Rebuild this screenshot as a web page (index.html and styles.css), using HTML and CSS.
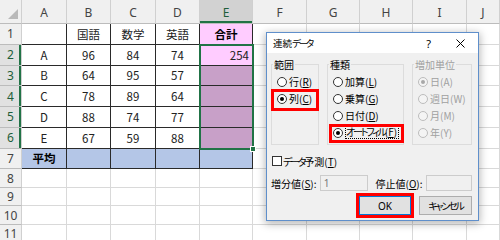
FILE: index.html
```html
<!DOCTYPE html>
<html lang="ja">
<head>
<meta charset="utf-8">
<title>連続データ</title>
<link rel="stylesheet" href="styles.css">
</head>
<body>
<div class="sheet">
  <div class="grid">
    <div class="hd corner"><svg class="tri" width="10" height="10" viewBox="0 0 10 10"><polygon points="10,0 10,10 0,10" fill="#b9b9b9"/></svg></div>
    <div class="hd col">A</div>
    <div class="hd col">B</div>
    <div class="hd col">C</div>
    <div class="hd col">D</div>
    <div class="hd col on">E</div>
    <div class="hd col">F</div>
    <div class="hd col">G</div>
    <div class="hd col">H</div>
    <div class="hd col">I</div>
    <div class="hd col">J</div>

    <div class="hd row">1</div>
    <div class="c t"></div><div class="c t">国語</div><div class="c t">数学</div><div class="c t">英語</div><div class="c t pink b">合計</div>
    <div class="c"></div><div class="c"></div><div class="c"></div><div class="c"></div><div class="c"></div>

    <div class="hd row on">2</div>
    <div class="c t">A</div><div class="c t">96</div><div class="c t">84</div><div class="c t">74</div><div class="c t pink r">254</div>
    <div class="c"></div><div class="c"></div><div class="c"></div><div class="c"></div><div class="c"></div>

    <div class="hd row on">3</div>
    <div class="c t">B</div><div class="c t">64</div><div class="c t">95</div><div class="c t">57</div><div class="c t shade"></div>
    <div class="c"></div><div class="c"></div><div class="c"></div><div class="c"></div><div class="c"></div>

    <div class="hd row on">4</div>
    <div class="c t">C</div><div class="c t">78</div><div class="c t">89</div><div class="c t">64</div><div class="c t shade"></div>
    <div class="c"></div><div class="c"></div><div class="c"></div><div class="c"></div><div class="c"></div>

    <div class="hd row on">5</div>
    <div class="c t">D</div><div class="c t">88</div><div class="c t">74</div><div class="c t">77</div><div class="c t shade"></div>
    <div class="c"></div><div class="c"></div><div class="c"></div><div class="c"></div><div class="c"></div>

    <div class="hd row on">6</div>
    <div class="c t">E</div><div class="c t">67</div><div class="c t">59</div><div class="c t">88</div><div class="c t shade"></div>
    <div class="c"></div><div class="c"></div><div class="c"></div><div class="c"></div><div class="c"></div>

    <div class="hd row">7</div>
    <div class="c t blue b">平均</div><div class="c t blue"></div><div class="c t blue"></div><div class="c t blue"></div><div class="c t blue"></div>
    <div class="c"></div><div class="c"></div><div class="c"></div><div class="c"></div><div class="c"></div>

    <div class="hd row">8</div>
    <div class="c"></div><div class="c"></div><div class="c"></div><div class="c"></div><div class="c"></div>
    <div class="c"></div><div class="c"></div><div class="c"></div><div class="c"></div><div class="c"></div>

    <div class="hd row">9</div>
    <div class="c"></div><div class="c"></div><div class="c"></div><div class="c"></div><div class="c"></div>
    <div class="c"></div><div class="c"></div><div class="c"></div><div class="c"></div><div class="c"></div>

    <div class="hd row">10</div>
    <div class="c"></div><div class="c"></div><div class="c"></div><div class="c"></div><div class="c"></div>
    <div class="c"></div><div class="c"></div><div class="c"></div><div class="c"></div><div class="c"></div>

    <div class="hd row">11</div>
    <div class="c"></div><div class="c"></div><div class="c"></div><div class="c"></div><div class="c"></div>
    <div class="c"></div><div class="c"></div><div class="c"></div><div class="c"></div><div class="c"></div>
  </div>

  <div class="selection"><span class="handle"></span></div>

  <div class="dialog">
    <div class="titlebar">
      <span class="title">連続<span class="k">データ</span></span>
      <span class="help">?</span>
      <svg class="close" width="9" height="9" viewBox="0 0 9 9"><path d="M0.5 0.5L8.5 8.5M8.5 0.5L0.5 8.5" stroke="#000" stroke-width="1"/></svg>
    </div>
    <div class="dbody">
      <div class="groups">
        <fieldset class="grp g1">
          <legend>範囲</legend>
          <div class="opt"><span class="radio"></span>行(<u>R</u>)</div>
          <div class="opt hl-col"><span class="radio checked"></span>列(<u>C</u>)</div>
        </fieldset>
        <fieldset class="grp g2">
          <legend>種類</legend>
          <div class="opt"><span class="radio"></span>加算(<u>L</u>)</div>
          <div class="opt"><span class="radio"></span>乗算(<u>G</u>)</div>
          <div class="opt"><span class="radio"></span>日付(<u>D</u>)</div>
          <div class="opt hl-auto"><span class="radio checked"></span><span class="focus"><span class="k">オートフィル</span>(<u>F</u>)</span></div>
        </fieldset>
        <fieldset class="grp g3 disabled">
          <legend>増加単位</legend>
          <div class="opt"><span class="radio checked"></span>日(A)</div>
          <div class="opt"><span class="radio"></span>週日(W)</div>
          <div class="opt"><span class="radio"></span>月(M)</div>
          <div class="opt"><span class="radio"></span>年(Y)</div>
        </fieldset>
      </div>
      <div class="check"><span class="box"></span><span class="k">データ</span>予測(<u>T</u>)</div>
      <div class="inputs">
        <span class="lbl l1">増分値(<u>S</u>):</span>
        <span class="field f1">1</span>
        <span class="lbl l2">停止値(<u>O</u>):</span>
        <span class="field f2"></span>
      </div>
      <div class="buttons">
        <span class="btn ok">OK</span>
        <span class="btn"><span class="k">キャンセル</span></span>
      </div>
    </div>
  </div>
</div>
</body>
</html>
```

FILE: styles.css
```css
* { box-sizing: border-box; }
html, body { margin: 0; padding: 0; }
body {
  width: 500px;
  height: 240px;
  overflow: hidden;
  background: #fff;
  font-family: "Noto Sans CJK JP", "Noto Sans", sans-serif;
}
.sheet {
  position: relative;
  width: 500px;
  height: 240px;
  overflow: hidden;
}
.grid {
  display: grid;
  grid-template-columns: 22px 45px 44px 45px 44px 53px 54px 53px 53px 54px 33px;
  grid-template-rows: 24px repeat(7, 20.75px) repeat(4, 18.5px);
}
.hd {
  background: #f0f0f0;
  color: #444;
  font-size: 12px;
  font-family: "Noto Sans", sans-serif;
  display: flex;
  align-items: center;
  justify-content: center;
  border-right: 1px solid #d0d0d0;
  border-bottom: 1px solid #bcbcbc;
}
.hd.col { padding-top: 2px; }
.hd.corner {
  justify-content: flex-end;
  align-items: flex-end;
  padding: 0 3px 4px 0;
}
.tri { display: block; }
.hd.col.on {
  background: #d2d2d2;
  color: #1e5e3a;
  box-shadow: inset 0 -2px 0 #217346;
}
.hd.row.on {
  background: #e1e1e1;
  color: #1e5e3a;
  box-shadow: inset -2px 0 0 #217346;
}
.c {
  border-right: 1px solid #d9d9d9;
  border-bottom: 1px solid #d9d9d9;
  font-size: 11.5px;
  color: #222;
  display: flex;
  align-items: center;
  justify-content: center;
}
.c.t {
  border-right-color: #2a2a2a;
  border-bottom-color: #2a2a2a;
}
.pink { background: #ffccff; }
.shade { background: #c8a0c8; }
.blue { background: #b4c6e7; }
.b { font-weight: bold; color: #000; }
.r { justify-content: flex-end; padding-right: 3px; }

.selection {
  position: absolute;
  left: 199px;
  top: 43.75px;
  width: 55px;
  height: 105.75px;
  border: 2px solid #217346;
}
.handle {
  position: absolute;
  right: -4px;
  bottom: -4px;
  width: 6px;
  height: 6px;
  background: #217346;
  border: 1px solid #fff;
}

/* dialog */
.dialog {
  position: absolute;
  left: 266px;
  top: 32px;
  width: 213px;
  height: 189px;
  border: 1px solid #5f8fcb;
  background: #f0f0f0;
  box-shadow: 0 2px 8px 1px rgba(0, 0, 0, 0.28);
  font-family: "Noto Sans CJK JP", sans-serif;
  font-feature-settings: "palt";
  font-size: 10px;
  color: #000;
  display: flex;
  flex-direction: column;
}
.k { letter-spacing: -2.2px; }
.titlebar {
  height: 20px;
  background: #fff;
  display: flex;
  align-items: center;
  padding: 0 13px 0 6px;
}
.title { flex: 1; font-size: 9.5px; }
.help {
  font-family: "Noto Sans", sans-serif;
  font-size: 11px;
  margin-right: 25px;
}
.close { display: block; }
.dbody {
  padding: 5px 6px 0 4px;
  display: flex;
  flex-direction: column;
}
.groups {
  display: flex;
  gap: 8px;
}
.grp {
  margin: 0;
  padding: 2px 5px 3px 5px;
  border: 1px solid #dcdcdc;
  min-width: 0;
}
.grp legend {
  padding: 0 1px;
  margin-left: -4px;
  line-height: 13px;
  font-size: 10px;
}
.g1 { width: 48px; }
.g2 { width: 77px; }
.g3 { width: 60px; color: #a0a0a0; }
.opt {
  position: relative;
  height: 17px;
  display: flex;
  align-items: center;
  white-space: nowrap;
}
.radio {
  width: 10px;
  height: 10px;
  border: 1px solid #333;
  border-radius: 50%;
  background: #fff;
  margin-right: 2px;
  flex: none;
  display: flex;
  align-items: center;
  justify-content: center;
}
.radio.checked::after {
  content: "";
  width: 4px;
  height: 4px;
  border-radius: 50%;
  background: #000;
}
.disabled .radio { border-color: #bcbcbc; background: #f4f4f4; }
.disabled .radio.checked::after { background: #a8a8a8; }
.hl-col::after {
  content: "";
  position: absolute;
  left: -6px;
  right: -6px;
  top: -1px;
  bottom: -4px;
  border: 3px solid #f00;
}
.hl-auto::after {
  content: "";
  position: absolute;
  left: -4px;
  right: -6px;
  top: 0;
  bottom: -2px;
  border: 3px solid #f00;
}
.focus {
  border: 1px dotted #000;
  line-height: 10px;
  padding: 0 1px 1px 0;
}
.check {
  height: 14px;
  margin-top: 9px;
  display: flex;
  align-items: center;
}
.box {
  width: 10px;
  height: 10px;
  border: 1px solid #333;
  background: #fff;
  margin-right: 1px;
  margin-left: 1px;
}
.inputs {
  margin-top: 7px;
  height: 16px;
  display: flex;
  align-items: center;
}
.lbl { white-space: nowrap; }
.l1 { width: 49px; }
.l2 { width: 51px; margin-left: 8px; }
.field {
  height: 16px;
  border: 1px solid #cccccc;
  background: #f0f0f0;
  color: #777;
  font-family: "Noto Sans", sans-serif;
  font-size: 10px;
  line-height: 14px;
  padding-left: 3px;
}
.f1 { width: 48px; }
.f2 { width: 46px; }
.buttons {
  margin-top: 5px;
  display: flex;
  justify-content: flex-end;
  gap: 8px;
}
.btn {
  height: 19px;
  width: 53px;
  border: 1px solid #adadad;
  background: #e1e1e1;
  display: flex;
  align-items: center;
  justify-content: center;
  font-size: 10px;
}
.btn.ok {
  width: 52px;
  border-color: #0078d7;
  outline: 3px solid #f00;
  outline-offset: 0;
  font-family: "Noto Sans", sans-serif;
}
```
